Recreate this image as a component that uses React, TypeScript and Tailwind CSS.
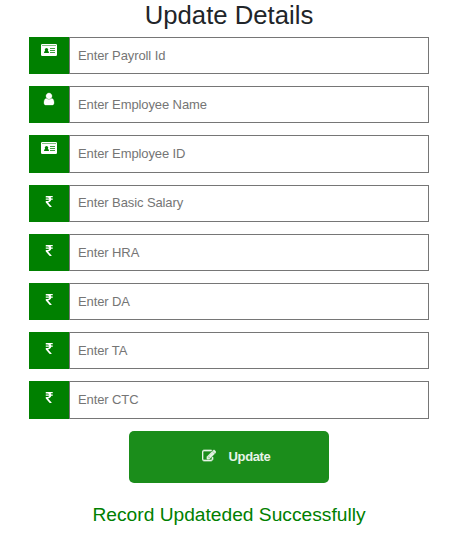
import React from "react";

type IconName = "card" | "user" | "rupee";

const paths = {
  user: "M1536 1399q0 109-62.5 187t-150.5 78h-854q-88 0-150.5-78t-62.5-187q0-85 8.5-160.5t31.5-152 58.5-131 94-89 134.5-34.5q131 128 313 128t313-128q76 0 134.5 34.5t94 89 58.5 131 31.5 152 8.5 160.5zm-256-887q0 159-112.5 271.5t-271.5 112.5-271.5-112.5-112.5-271.5 112.5-271.5 271.5-112.5 271.5 112.5 112.5 271.5z",
  rupee: "M1345 470v102q0 14-9 23t-23 9h-168q-23 144-129 234t-276 110q167 178 459 536 14 16 4 34-8 18-29 18h-195q-16 0-25-12-306-367-498-571-9-9-9-22v-127q0-13 9.5-22.5t22.5-9.5h112q132 0 212.5-43t102.5-125h-427q-14 0-23-9t-9-23v-102q0-14 9-23t23-9h413q-57-113-268-113h-145q-13 0-22.5-9.5t-9.5-22.5v-133q0-14 9-23t23-9h832q14 0 23 9t9 23v102q0 14-9 23t-23 9h-233q47 61 64 144h171q14 0 23 9t9 23z",
  edit: "M888 1184l116-116-152-152-116 116v56h96v96h56zm440-720q-16-16-33 1l-350 350q-17 17-1 33t33-1l350-350q17-17 1-33zm80 594v190q0 119-84.5 203.5t-203.5 84.5h-832q-119 0-203.5-84.5t-84.5-203.5v-832q0-119 84.5-203.5t203.5-84.5h832q63 0 117 25 15 7 18 23 3 17-9 29l-49 49q-14 14-32 8-23-6-45-6h-832q-66 0-113 47t-47 113v832q0 66 47 113t113 47h832q66 0 113-47t47-113v-126q0-13 9-22l64-64q15-15 35-7t20 29zm-96-738l288 288-672 672h-288v-288zm444 132l-92 92-288-288 92-92q28-28 68-28t68 28l152 152q28 28 28 68t-28 68z",
};

function Icon({ name }: { name: IconName }) {
  if (name === "card") {
    return (
      <svg className="h-[14px] w-4" viewBox="0 0 16 14" fill="currentColor">
        <path
          fillRule="evenodd"
          d="M1.25 1h13.5Q16 1 16 2.25v9.5Q16 13 14.75 13H1.25Q0 13 0 11.75v-9.5Q0 1 1.25 1zM1 3h14v-.4H1zM3 10h5q0-2-1.2-2.1a1.7 1.7 0 1 0-2.6 0Q3 8 3 10zM9 5.1v.6h5V5.1zM9 7.1v.7h5V7.1zM9 9.2v.7h5V9.2z"
        />
      </svg>
    );
  }
  if (name === "user") {
    return (
      <svg className="size-[14px]" viewBox="0 0 1792 1792" fill="currentColor" stroke="currentColor" strokeWidth="40">
        <path d={paths.user} />
      </svg>
    );
  }
  return (
    <svg className="mt-1 mr-px size-[14px]" viewBox="-32 0 1792 1792" fill="currentColor">
      <path d={paths.rupee} />
    </svg>
  );
}

const fields: { icon: IconName; label: string }[] = [
  { icon: "card", label: "Enter Payroll Id" },
  { icon: "user", label: "Enter Employee Name" },
  { icon: "card", label: "Enter Employee ID" },
  { icon: "rupee", label: "Enter Basic Salary" },
  { icon: "rupee", label: "Enter HRA" },
  { icon: "rupee", label: "Enter DA" },
  { icon: "rupee", label: "Enter TA" },
  { icon: "rupee", label: "Enter CTC" },
];

export default function App() {
  return (
    <main className="flex h-[552px] flex-col bg-white pl-[29px] font-['Liberation_Sans',Arial,sans-serif]">
      <div className="flex w-[400px] flex-col items-center">
        <h2 className="h-[37px] text-[25.7px] leading-[31px] text-[#212529]">Update Details</h2>
        <form className="flex w-full flex-col gap-3">
          {fields.map(({ icon, label }) => (
            <label key={label} className="flex h-[37.2px]">
              <span className="flex w-10 shrink-0 justify-center bg-[#008000] pt-[6px] text-white">
                <Icon name={icon} />
              </span>
              <input
                type="text"
                placeholder={label}
                className="min-w-0 flex-1 border border-[#767676] px-2 text-[13px] tracking-[-0.1px] placeholder:text-[#757575] placeholder:opacity-100"
              />
            </label>
          ))}
        </form>
        <button className="mt-[12.4px] flex h-[52px] w-[200px] items-center justify-center rounded-[5px] bg-[#1b8d1b] pl-[14px] text-[13px] font-bold tracking-[-0.35px] text-[#e8f4e8]">
          <svg className="mr-[13px] mb-px size-[14px]" viewBox="0 0 1792 1792" fill="currentColor" stroke="currentColor" strokeWidth="90">
            <path d={paths.edit} />
          </svg>
          Update
        </button>
        <p className="mt-[18px] text-[19.2px] leading-[28px] text-[#008000]">Record Updateded Successfully</p>
      </div>
    </main>
  );
}
